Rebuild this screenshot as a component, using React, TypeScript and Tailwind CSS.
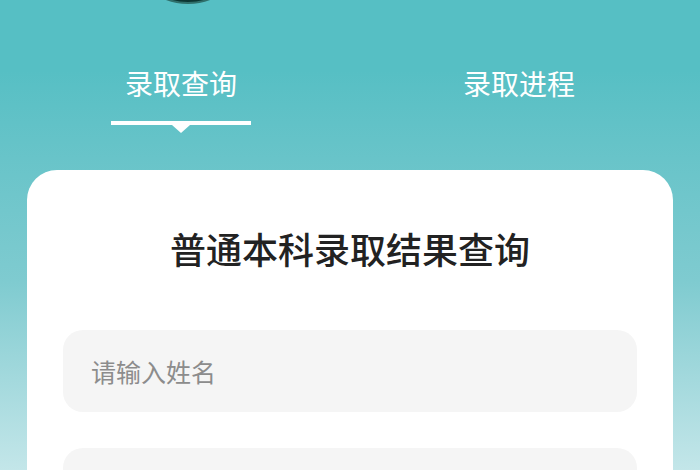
const cjk = "font-['Noto_Sans_CJK_SC','Noto_Sans',sans-serif]";

function Tab({ label, active }: { label: string; active?: boolean }) {
  return (
    <div className="flex flex-col items-center">
      <span className="text-[28px] leading-none font-normal text-white">{label}</span>
      {active && (
        <div className="mt-[24px] flex flex-col items-center">
          <div className="h-[4px] w-[140px] bg-white" />
          <div className="h-0 w-0 border-x-[9px] border-t-[8px] border-x-transparent border-t-white" />
        </div>
      )}
    </div>
  );
}

function Field({ placeholder }: { placeholder?: string }) {
  return (
    <div className="flex h-[82px] items-center rounded-[20px] bg-[#f5f5f5] px-7">
      {placeholder && (
        <span className="text-[25px] leading-none text-[#8c8c8c]">{placeholder}</span>
      )}
    </div>
  );
}

export default function App() {
  return (
    <div
      className={`h-[470px] w-[700px] overflow-hidden bg-linear-to-b from-[#56bfc4] from-15% via-[#7fcbd0] via-60% to-[#c3e6e9] ${cjk}`}
    >
      {/* logo, mostly scrolled off the top */}
      <div className="-mt-[116px] ml-[128px] h-[120px] w-[120px] rounded-full border-2 border-[#2f6f6b] bg-[#0c3532]" />

      {/* Tabs */}
      <div className="mt-[65px] grid grid-cols-2 px-3">
        <Tab label="录取查询" active />
        <Tab label="录取进程" />
      </div>

      {/* Card */}
      <div className="mx-[27px] mt-[37px] rounded-[30px] bg-white px-9 pt-[60px] pb-10">
        <h1 className="text-center text-[36px] leading-none font-medium text-[#222222]">
          普通本科录取结果查询
        </h1>
        <div className="mt-[64px] flex flex-col gap-[36px]">
          <Field placeholder="请输入姓名" />
          <Field />
        </div>
      </div>
    </div>
  );
}
